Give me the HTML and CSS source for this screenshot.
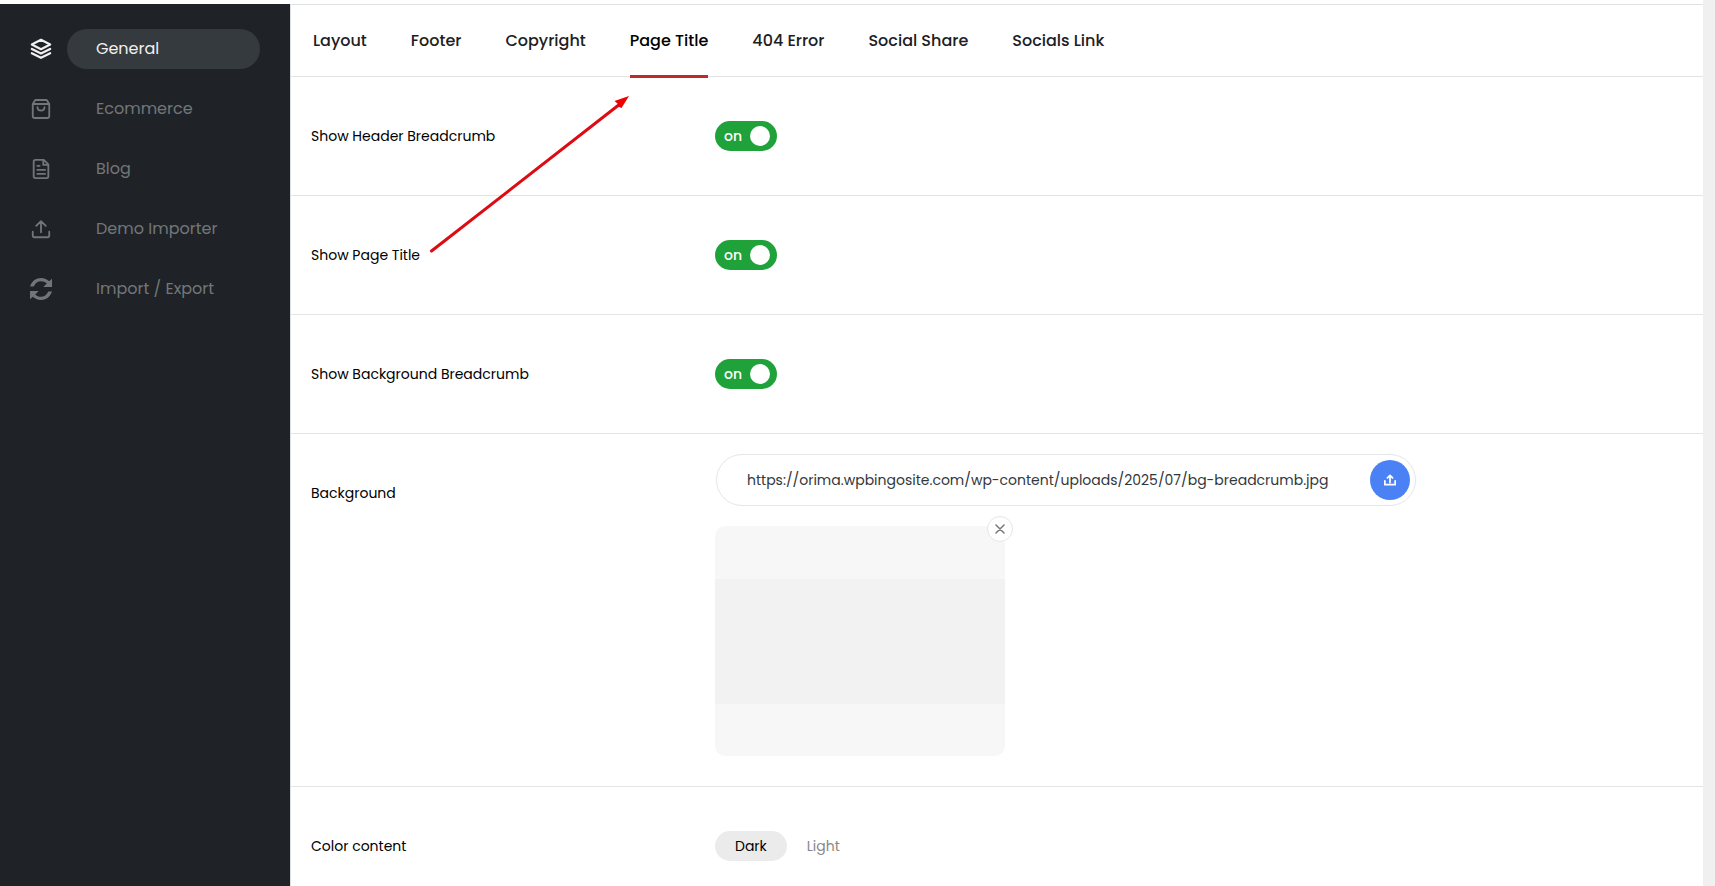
FILE: index.html
```html
<!DOCTYPE html>
<html lang="en">

<head>
    <meta charset="UTF-8">
    <title>Theme Options</title>
    <link rel="stylesheet" href="styles.css">
</head>

<body>
    <div class="wrap">
        <nav class="sidebar">
            <ul class="menu">
                <li class="active">
                    <a href="#general">
                        <svg viewBox="0 0 24 24"><path stroke-width="2.4" d="M12 2L22 7.2L12 12.2L2 7.2Z"/><path stroke-width="2.4" d="M2 12L12 17L22 12M2 16.6L12 21.6L22 16.6"/></svg>
                        <span>General</span>
                    </a>
                </li>
                <li>
                    <a href="#ecommerce">
                        <svg viewBox="0 0 24 24"><path d="M3 6.5L5.2 3Q5.6 2.2 6.6 2.2H17.4Q18.4 2.2 18.8 3L21 6.5V19.6Q21 21.8 18.8 21.8H5.2Q3 21.8 3 19.6ZM3 6.5H21M8.2 10C8.2 14.8 15.8 14.8 15.8 10"/></svg>
                        <span>Ecommerce</span>
                    </a>
                </li>
                <li>
                    <a href="#blog">
                        <svg viewBox="0 0 24 24"><path d="M15 2H6Q4 2 4 4V20Q4 22 6 22H18Q20 22 20 20V7ZM14.5 2V7.5H20M8 8.5H10.5M8 13H16.5M8 17.3H16.5"/></svg>
                        <span>Blog</span>
                    </a>
                </li>
                <li>
                    <a href="#demo">
                        <svg viewBox="0 0 24 24"><path d="M3 15V19.2Q3 21 4.8 21H19.2Q21 21 21 19.2V15M12 15.5V3.5M6.8 8.6L12 3.4L17.2 8.6"/></svg>
                        <span>Demo Importer</span>
                    </a>
                </li>
                <li>
                    <a href="#import">
                        <svg class="solid" viewBox="1 1 22 22"><path d="M1 9.5C3 3.8 7.2 1 12 1C15.4 1 18.2 2.3 20.2 4.2L23 1.7V10H14.3L17.8 6.6C16.2 5 14.2 4.2 12 4.2C8.8 4.2 6.2 6 4.8 9.5Z"/><path d="M23 14.5C21 20.2 16.8 23 12 23C8.6 23 5.8 21.7 3.8 19.8L1 22.3V14H9.7L6.2 17.4C7.8 19 9.8 19.8 12 19.8C15.2 19.8 17.8 18 19.2 14.5Z"/></svg>
                        <span>Import / Export</span>
                    </a>
                </li>
            </ul>
        </nav>

        <main class="panel">
            <ul class="tabs">
                <li><a href="#layout">Layout</a></li>
                <li><a href="#footer">Footer</a></li>
                <li><a href="#copyright">Copyright</a></li>
                <li><a class="active" href="#page-title">Page Title</a></li>
                <li><a href="#404">404 Error</a></li>
                <li><a href="#share">Social Share</a></li>
                <li><a href="#link">Socials Link</a></li>
            </ul>

            <div class="row">
                <label class="name" for="breadcrumb">Show Header Breadcrumb</label>
                <label class="switch">
                    <input type="checkbox" id="breadcrumb" checked>
                    <span>on</span>
                </label>
            </div>
            <div class="row">
                <label class="name" for="title">Show Page Title</label>
                <label class="switch">
                    <input type="checkbox" id="title" checked>
                    <span>on</span>
                </label>
            </div>
            <div class="row">
                <label class="name" for="bg-breadcrumb">Show Background Breadcrumb</label>
                <label class="switch">
                    <input type="checkbox" id="bg-breadcrumb" checked>
                    <span>on</span>
                </label>
            </div>
            <div class="row media">
                <label class="name" for="bg">Background</label>
                <div class="value">
                    <div class="url">
                        <input type="text" id="bg" value="https://orima.wpbingosite.com/wp-content/uploads/2025/07/bg-breadcrumb.jpg">
                        <button type="button" class="upload" aria-label="Upload">
                            <svg viewBox="0 0 14 14"><path d="M1 8V12.5H13V8M7 10V2M4 4.6L7 1.6L10 4.6"/></svg>
                        </button>
                    </div>
                    <div class="preview">
                        <div class="image"></div>
                        <button type="button" class="remove" aria-label="Remove">
                            <svg viewBox="0 0 10 10"><path d="M1 1L9 9M9 1L1 9"/></svg>
                        </button>
                    </div>
                </div>
            </div>
            <div class="row">
                <span class="name">Color content</span>
                <div class="choice">
                    <label><input type="radio" name="color" checked><span>Dark</span></label>
                    <label><input type="radio" name="color"><span>Light</span></label>
                </div>
            </div>

            <svg class="arrow" viewBox="0 0 200 160"><path class="line" d="M1.5 156L190 9"/><path class="head" d="M199 1L184.500 6L188 9L187 11L191.500 13Z"/></svg>
        </main>
    </div>
</body>

</html>
```
FILE: styles.css
```css
* {
    margin: 0;
    padding: 0;
    box-sizing: border-box;
}

body {
    background: #f0f0f1;
    font-family: Poppins, Inter, sans-serif;
    font-size: 14px;
    color: #111;
}

ul {
    list-style: none;
}

a {
    text-decoration: none;
}

button {
    border: none;
    cursor: pointer;
}

svg {
    display: block;
    fill: none;
    stroke: currentColor;
    stroke-width: 2;
    stroke-linecap: round;
    stroke-linejoin: round;
}

.wrap {
    display: flex;
    height: 100vh;
    margin-right: 12px;
    padding-top: 4px;
    background: #fff;
    overflow: hidden;
}

/* sidebar */
.sidebar {
    flex: 0 0 290px;
    padding: 25px 30px;
    background: #1f2327;
}

.menu {
    display: flex;
    flex-direction: column;
    gap: 20px;
}

.menu a {
    display: flex;
    align-items: center;
    gap: 15px;
    color: #72767a;
    font-size: 16px;
}

.menu svg {
    width: 22px;
    height: 22px;
}

.menu .solid {
    fill: currentColor;
    stroke: none;
}

.menu span {
    flex: 1;
    height: 40px;
    line-height: 40px;
    padding-left: 29px;
    border-radius: 20px;
}

.menu .active a {
    color: #f0f0f1;
}

.menu .active span {
    background: #343a3d;
}

/* options */
.panel {
    flex: 1;
    position: relative;
    border-top: 1px solid #dfe1e4;
    border-left: 1px solid #dcdde0;
}

.tabs {
    display: flex;
    gap: 44px;
    padding: 0 22px;
    height: 72px;
    border-bottom: 1px solid #e2e4e6;
}

.tabs a {
    display: block;
    height: 73px;
    line-height: 71px;
    font-size: 16px;
    font-weight: 500;
    color: #1d2023;
}

.tabs .active {
    color: #000;
    border-bottom: 3px solid #c1272d;
}

.row {
    display: grid;
    grid-template-columns: 404px 1fr;
    align-items: center;
    min-height: 119px;
    padding: 0 20px;
    border-bottom: 1px solid #e2e4e6;
}

.name {
    color: #000;
    line-height: 22px;
}

.switch {
    position: relative;
    display: flex;
    align-items: center;
    width: 62px;
    height: 30px;
    padding-left: 9px;
    border-radius: 15px;
    background: #1fa23a;
    color: #fff;
    font-weight: 500;
    cursor: pointer;
}

.switch input {
    position: absolute;
    right: 7px;
    width: 20px;
    height: 20px;
    border-radius: 50%;
    background: #fff;
    appearance: none;
}

.media {
    align-items: start;
    padding-top: 20px;
    padding-bottom: 30px;
}

.media .name {
    padding-top: 28px;
}

.url {
    display: flex;
    max-width: 700px;
    height: 52px;
    margin-left: 1px;
    padding: 5px;
    border: 1px solid #e5e6e8;
    border-radius: 26px;
}

.url input {
    flex: 1;
    min-width: 0;
    padding-left: 25px;
    border: none;
    outline: none;
    background: none;
    font: inherit;
    color: #32373c;
}

.upload {
    display: flex;
    align-items: center;
    justify-content: center;
    width: 40px;
    height: 40px;
    border-radius: 50%;
    background: #4a82f5;
    color: #fff;
}

.upload svg {
    width: 12px;
    height: 12px;
    stroke-width: 2;
}

.preview {
    position: relative;
    width: 290px;
    margin-top: 20px;
}

.image {
    height: 230px;
    border-radius: 10px;
    background: linear-gradient(#f7f7f7 53px, #f2f2f2 53px, #f2f2f2 178px, #f7f7f7 178px);
}

.remove {
    position: absolute;
    top: -10px;
    right: -8px;
    display: flex;
    align-items: center;
    justify-content: center;
    width: 26px;
    height: 26px;
    border: 1px solid #e5e6e8;
    border-radius: 50%;
    background: #fff;
    color: #777;
}

.remove svg {
    width: 10px;
    height: 10px;
    stroke-width: 1.5;
}

.choice {
    display: flex;
}

.choice input {
    position: absolute;
    appearance: none;
}

.choice span {
    display: block;
    padding: 0 20px;
    border-radius: 15px;
    line-height: 30px;
    color: #888;
    cursor: pointer;
}

.choice input:checked + span {
    background: #ebebeb;
    color: #000;
}

.arrow {
    position: absolute;
    top: 90px;
    left: 139px;
    width: 200px;
    height: 160px;
    pointer-events: none;
}

.arrow .line {
    stroke: #dd0c12;
    stroke-width: 3;
}

.arrow .head {
    fill: #ee0000;
    stroke: none;
}
```
